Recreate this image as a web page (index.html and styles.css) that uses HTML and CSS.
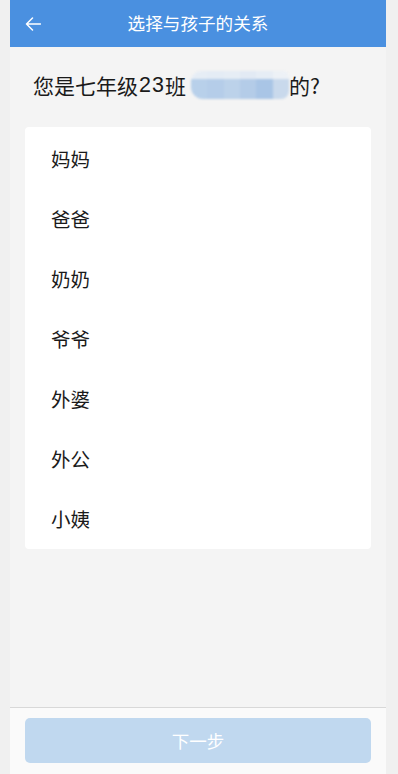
FILE: index.html
```html
<!DOCTYPE html>
<html lang="zh-CN">
<head>
<meta charset="utf-8">
<title>选择与孩子的关系</title>
<link rel="stylesheet" href="styles.css">
</head>
<body>
<div class="page">
  <header class="topbar">
    <span class="back">
      <svg width="16" height="14" viewBox="0 0 16 14"><path d="M7.5 1 L1.5 7 L7.5 13 M1.5 7 H15.5" fill="none" stroke="#fff" stroke-width="1.5" stroke-linecap="round" stroke-linejoin="round"/></svg>
    </span>
    <h1 class="title">选择与孩子的关系</h1>
  </header>
  <p class="question">您是七年级<span class="num">23</span>班<span class="masked"><span class="m m1"></span><span class="m m2"></span><span class="m m3"></span><span class="m m4"></span><span class="m m5"></span><span class="m m6"></span></span>的?</p>
  <ul class="options">
    <li class="option">妈妈</li>
    <li class="option">爸爸</li>
    <li class="option">奶奶</li>
    <li class="option">爷爷</li>
    <li class="option">外婆</li>
    <li class="option">外公</li>
    <li class="option">小姨</li>
  </ul>
  <div class="spacer"></div>
  <footer class="footer">
    <button class="next" type="button">下一步</button>
  </footer>
</div>
</body>
</html>
```
FILE: styles.css
```css
* { box-sizing: border-box; }
html, body { margin: 0; padding: 0; }
body {
  background: #f0f0f0;
  font-family: "Noto Sans CJK SC", "Noto Sans", "Liberation Sans", sans-serif;
  color: #1a1a1a;
}
.page {
  width: 376px;
  margin-left: 10px;
  height: 774px;
  background: #f4f4f4;
  display: flex;
  flex-direction: column;
}
.topbar {
  height: 47px;
  flex: none;
  background: #4a90e0;
  position: relative;
  display: flex;
  align-items: center;
  justify-content: center;
}
.back {
  position: absolute;
  left: 15px;
  top: 17px;
  width: 16px;
  height: 14px;
  display: flex;
}
.title {
  margin: 0;
  font-size: 17.6px;
  font-weight: normal;
  color: #fff;
  line-height: 24px;
  margin-top: -2px;
}
.question {
  margin: 0;
  height: 80px;
  padding: 26px 0 30px 23px;
  font-size: 21px;
  line-height: 24px;
  color: #1a1a1a;
  display: flex;
  align-items: center;
  flex: none;
}
.num {
  font-family: "Liberation Sans", sans-serif;
  font-size: 21.5px;
  letter-spacing: 1px;
  margin-left: 1px;
}
.masked {
  display: inline-flex;
  width: 98px;
  height: 28px;
  margin: -2px 0 -2px 5px;
  filter: blur(1px);
  border-radius: 10px 6px 8px 12px;
  overflow: hidden;
}
.m { flex: 1; height: 100%; }
.m1 { background: linear-gradient(#e6edf5 30%, #b8d0ea 30%); }
.m2 { background: linear-gradient(#e4ecf5 30%, #b5cde9 30%); }
.m3 { background: linear-gradient(#e6edf5 30%, #bcd2ea 30%); }
.m4 { background: linear-gradient(#e2eaf4 30%, #b4cce8 30%); }
.m5 { background: linear-gradient(#e6edf5 30%, #a9c5e6 30%); }
.m6 { background: linear-gradient(#edf1f6 30%, #c9d9ec 30%); }
.options {
  list-style: none;
  margin: 0 15px;
  padding: 1px 0 1px;
  background: #fff;
  border-radius: 4px;
  flex: none;
}
.option {
  height: 60px;
  display: flex;
  align-items: center;
  padding-left: 26px;
  font-size: 19.5px;
  color: #1a1a1a;
}
.spacer { flex: 1; }
.footer {
  flex: none;
  height: 67px;
  border-top: 1px solid #d8d8d8;
  background: #fafafa;
  padding: 10px 15px 11px;
}
.next {
  width: 100%;
  height: 45px;
  border: none;
  border-radius: 5px;
  background: #c0d8ef;
  color: #fff;
  font-family: inherit;
  font-size: 17.5px;
  padding: 0;
}
```
